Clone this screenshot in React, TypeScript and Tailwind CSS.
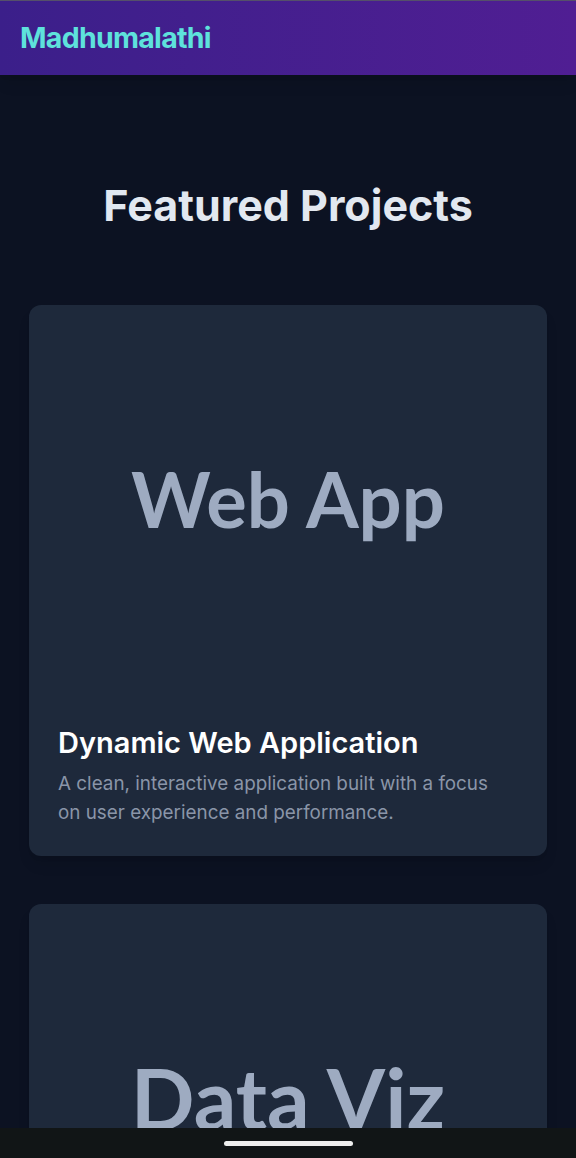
import React from "react";

const projects = [
  {
    label: "Web App",
    size: "text-[76px]",
    title: "Dynamic Web Application",
    text: "A clean, interactive application built with a focus on user experience and performance.",
  },
  {
    label: "Data Viz",
    size: "text-[84px]",
    title: "Interactive Data Dashboard",
    text: "Turning raw numbers into clear, explorable charts and visual stories.",
  },
];

const ProjectCard = ({
  label,
  size,
  title,
  text,
}: {
  label: string;
  size: string;
  title: string;
  text: string;
}) => (
  <div className="rounded-[12px] bg-[#1e293b] overflow-hidden shadow-lg">
    <div className="h-[388px] flex items-center justify-center">
      <span
        className={`${size} font-bold text-[#9eabc1] leading-none`}
        style={{ fontFamily: "Lato, sans-serif" }}
      >
        {label}
      </span>
    </div>
    <div className="px-[29px] pt-[29px] pb-[29px]">
      <h3 className="text-[29px] leading-[41px] font-semibold text-white mb-[6px]">{title}</h3>
      <p className="text-[18.85px] leading-[29px] text-[#8a95a8] pr-[10px]">{text}</p>
    </div>
  </div>
);

export default function App() {
  return (
    <div
      className="min-h-screen bg-[#0c1222]"
      style={{ fontFamily: "Inter, 'Noto Sans', sans-serif" }}
    >
      <header className="h-[75px] border-t border-[#55506a] bg-gradient-to-r from-[#3b1f8a] to-[#501e93] shadow-lg flex items-center px-[20px]">
        <span className="text-[28.5px] font-bold text-[#5ee2dc] tracking-tight">Madhumalathi</span>
      </header>

      <main className="px-[29px] pt-[104px] pb-[80px]">
        <h2 className="text-center text-[43px] leading-[53px] font-bold text-[#e2e8f0] mb-[73px]">
          Featured Projects
        </h2>
        <div className="flex flex-col gap-[48px]">
          {projects.map((p) => (
            <ProjectCard key={p.label} {...p} />
          ))}
        </div>
      </main>

      <div className="fixed bottom-0 left-0 right-0 h-[30px] bg-[#111516] flex items-center justify-center">
        <div className="w-[129px] h-[5px] rounded-full bg-[#eeeeee]" />
      </div>
    </div>
  );
}
